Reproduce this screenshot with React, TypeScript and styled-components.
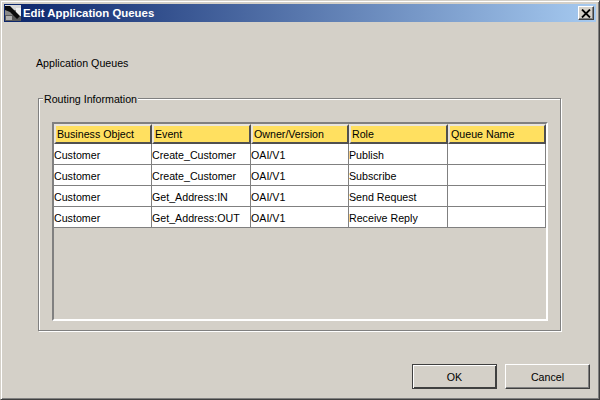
import styled, { createGlobalStyle } from 'styled-components';

const COLUMNS = ['Business Object', 'Event', 'Owner/Version', 'Role', 'Queue Name'];
const COLUMN_WIDTHS = [98, 99, 98, 99, 98];

const ROWS = [
  ['Customer', 'Create_Customer', 'OAI/V1', 'Publish', ''],
  ['Customer', 'Create_Customer', 'OAI/V1', 'Subscribe', ''],
  ['Customer', 'Get_Address:IN', 'OAI/V1', 'Send Request', ''],
  ['Customer', 'Get_Address:OUT', 'OAI/V1', 'Receive Reply', ''],
];

export default function App() {
  return (
    <>
      <GlobalStyle />
      <Window>
        <TitleBar>
          <AppIcon viewBox="0 0 16 16">
            <rect width="16" height="16" fill="#8a8a8a" />
            <rect x="0" y="0" width="16" height="5" fill="#d8d8d8" />
            <rect x="0" y="10" width="16" height="6" fill="#5a5a5a" />
            <rect x="11" y="3" width="5" height="8" fill="#efefef" />
            <path d="M0 1 L5 1 L15 11 L12 14 L8 10 L5 7 L0 5 Z" fill="#0c0c0c" />
            <rect x="1" y="11" width="6" height="4" fill="#b0b0b0" />
          </AppIcon>
          <TitleText>Edit Application Queues</TitleText>
          <CloseButton>
            <svg width="10" height="9" viewBox="0 0 10 9">
              <path d="M1 0.5 L9 8.5 M9 0.5 L1 8.5" stroke="#000" strokeWidth="1.8" fill="none" />
            </svg>
          </CloseButton>
        </TitleBar>
        <Body>
          <Heading>Application Queues</Heading>
          <GroupBox>
            <Legend>Routing Information</Legend>
            <TablePanel>
              <HeaderRow>
                {COLUMNS.map((name, i) => (
                  <HeaderCell key={name} $width={COLUMN_WIDTHS[i]}>{name}</HeaderCell>
                ))}
              </HeaderRow>
              {ROWS.map((row, r) => (
                <DataRow key={r}>
                  {row.map((value, i) => (
                    <DataCell key={i} $width={COLUMN_WIDTHS[i]}>{value}</DataCell>
                  ))}
                </DataRow>
              ))}
            </TablePanel>
          </GroupBox>
          <ButtonRow>
            <DefaultButton>OK</DefaultButton>
            <PushButton>Cancel</PushButton>
          </ButtonRow>
        </Body>
      </Window>
    </>
  );
}

const GlobalStyle = createGlobalStyle`
  html, body {
    margin: 0;
    padding: 0;
    background: #d4d0c8;
  }
`

const Window = styled.div`
  box-sizing: border-box;
  width: 600px;
  height: 400px;
  background: #d4d0c8;
  border-top: 1px solid #d4d0c8;
  border-left: 1px solid #d4d0c8;
  border-right: 1px solid #404040;
  border-bottom: 1px solid #404040;
  box-shadow: inset 1px 1px 0 #ffffff, inset -1px -1px 0 #808080;
  padding: 3px;
  font-family: "Liberation Sans", Arial, sans-serif;
  font-size: 10.67px;
  color: #000;
  display: flex;
  flex-direction: column;
`

const TitleBar = styled.div`
  height: 18px;
  flex: none;
  display: flex;
  align-items: center;
  padding-right: 2px;
  background: linear-gradient(to right, #0a246a, #a6caf0);
`

const AppIcon = styled.svg`
  width: 16px;
  height: 16px;
  margin: 0 2px 0 1px;
  flex: none;
`

const TitleText = styled.div`
  flex: 1;
  color: #fff;
  font-weight: bold;
  font-size: 11.4px;
`

const CloseButton = styled.div`
  box-sizing: border-box;
  width: 16px;
  height: 14px;
  display: flex;
  align-items: center;
  justify-content: center;
  background: #d4d0c8;
  border-top: 1px solid #fff;
  border-left: 1px solid #fff;
  border-right: 1px solid #404040;
  border-bottom: 1px solid #404040;
  box-shadow: inset -1px -1px 0 #808080;
`

const Body = styled.div`
  flex: 1;
  display: flex;
  flex-direction: column;
  padding: 0 6px 0 32px;
`

const Heading = styled.div`
  margin-top: 35px;
  height: 13px;
  line-height: 13px;
`

const GroupBox = styled.div`
  position: relative;
  box-sizing: border-box;
  margin: 28px 0 0 2px;
  width: 523px;
  height: 233px;
  padding: 23px 0 0 13px;
  border: 1px solid #808080;
  box-shadow: 1px 1px 0 #fff, inset 1px 1px 0 #fff;
`

const Legend = styled.div`
  position: absolute;
  left: 4px;
  top: -6px;
  padding: 0 1px;
  height: 13px;
  line-height: 13px;
  background: #d4d0c8;
`

const TablePanel = styled.div`
  box-sizing: border-box;
  width: 496px;
  height: 199px;
  border-top: 2px solid #808080;
  border-left: 2px solid #808080;
  border-right: 2px solid #fff;
  border-bottom: 2px solid #fff;
`

const HeaderRow = styled.div`
  display: flex;
  height: 20px;
`

const HeaderCell = styled.div<{ $width: number }>`
  box-sizing: border-box;
  width: ${p => p.$width}px;
  height: 20px;
  line-height: 17px;
  padding-left: 1px;
  background: #ffe060;
  border-top: 2px solid #e8e4dc;
  border-left: 2px solid #e8e4dc;
  border-right: 2px solid #505050;
  border-bottom: 2px solid #505050;
  white-space: nowrap;
  overflow: hidden;
`

const DataRow = styled.div`
  display: flex;
  height: 21px;
`

const DataCell = styled.div<{ $width: number }>`
  box-sizing: border-box;
  width: ${p => p.$width}px;
  height: 21px;
  line-height: 22px;
  background: #fff;
  border-right: 1px solid #808080;
  border-bottom: 1px solid #808080;
  white-space: nowrap;
  overflow: hidden;
`

const ButtonRow = styled.div`
  margin-top: 33px;
  display: flex;
  justify-content: flex-end;
  gap: 8px;
`

const PushButton = styled.div`
  box-sizing: border-box;
  width: 85px;
  height: 25px;
  display: flex;
  align-items: center;
  justify-content: center;
  background: #d4d0c8;
  border-top: 1px solid #fff;
  border-left: 1px solid #fff;
  border-right: 1px solid #404040;
  border-bottom: 1px solid #404040;
  box-shadow: inset -1px -1px 0 #808080;
`

const DefaultButton = styled(PushButton)`
  border: 1px solid #404040;
  box-shadow: inset 1px 1px 0 #fff, inset -1px -1px 0 #404040;
`
